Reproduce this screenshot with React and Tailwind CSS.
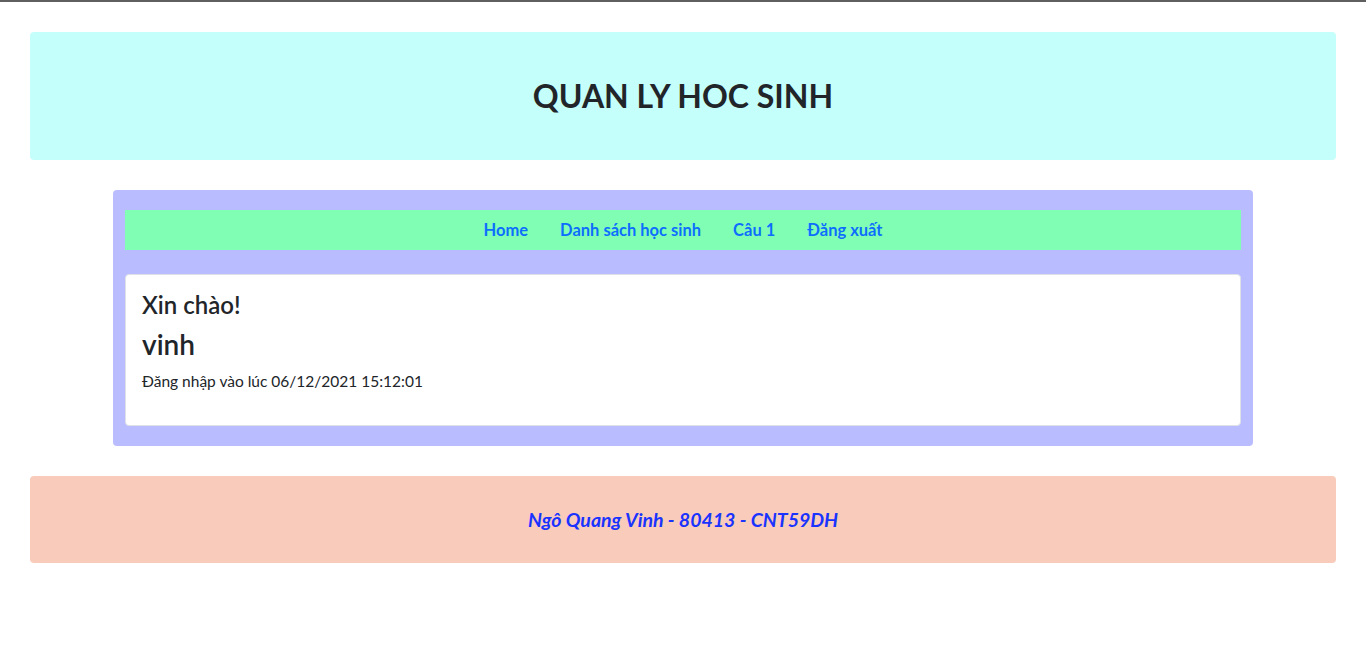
export default function App() {
  const font = { fontFamily: '"Lato", "Noto Sans", sans-serif' };
  return (
    <div className="min-h-[663px] bg-white border-t-2 border-[#5f5f5f] px-[30px] pt-[30px]" style={font}>
      <div className="h-[128px] bg-[#c4fffb] rounded flex items-center justify-center">
        <h2 className="text-[32px] font-bold text-[#212529] leading-[1.2]">QUAN LY HOC SINH</h2>
      </div>
      <div className="w-[1140px] mx-auto mt-[30px] bg-[#b9bdff] rounded px-3 pt-5 pb-5">
        <nav className="h-10 bg-[#80ffb4] flex items-center justify-center">
          {["Home", "Danh sách học sinh", "Câu 1", "Đăng xuất"].map((t) => (
            <a key={t} className="px-4 text-[16.5px] font-bold text-[#0d6efd]">{t}</a>
          ))}
        </nav>
        <div className="mt-6 bg-white border border-[#dee2e6] rounded p-4 text-[#212529]">
          <h4 className="text-[24px] font-semibold leading-[1.2] mb-2">Xin chào!</h4>
          <h3 className="text-[28px] font-semibold leading-[1.2] mb-2">vinh</h3>
          <p className="text-[15.5px] leading-6 mb-4">Đăng nhập vào lúc 06/12/2021 15:12:01</p>
        </div>
      </div>
      <div className="mt-[30px] h-[87px] bg-[#f8cbbb] rounded flex items-center justify-center">
        <h5 className="text-[19.5px] font-bold italic text-[#1a33ff]">Ngô Quang Vinh - 80413 - CNT59DH</h5>
      </div>
    </div>
  );
}
